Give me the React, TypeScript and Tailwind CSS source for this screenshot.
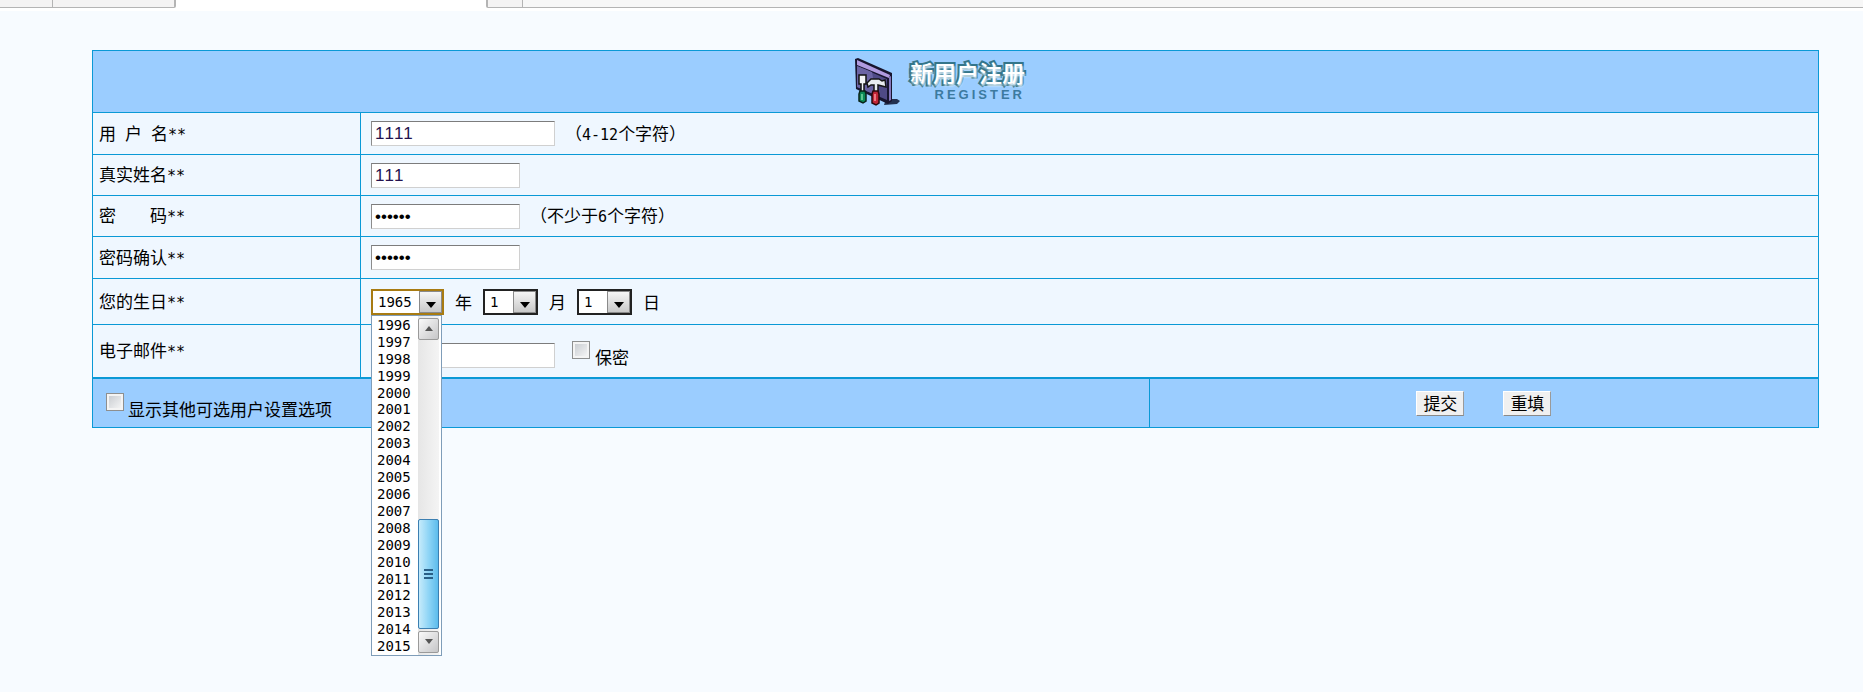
import type { ReactNode } from 'react';

const years = Array.from({ length: 20 }, (_, i) => 1996 + i);

const inputClass =
    'h-[25px] border border-t-[#7c7c7c] border-l-[#8c8c8c] border-r-[#d0d0d0] border-b-[#d0d0d0] bg-white pl-[3px] pt-px font-[Liberation_Sans,sans-serif] text-[17px] leading-[22px] [font-kerning:none] outline-none';

const cellBorder = 'border border-[#0a99d6]';

function Mono({ children }: { children: ReactNode }) {
    return <span className="font-[DejaVu_Sans_Mono,monospace] text-[15px]">{children}</span>;
}

function Row({ label, htmlFor, height, children }: { label: ReactNode; htmlFor: string; height: string; children: ReactNode }) {
    return (
        <tr className={height}>
            <th scope="row" className={`${cellBorder} pl-[6px] text-left align-middle font-normal`}>
                <label htmlFor={htmlFor} className="whitespace-pre">
                    {label}
                    <Mono>**</Mono>
                </label>
            </th>
            <td className={`${cellBorder} pl-[10px] align-middle`}>{children}</td>
        </tr>
    );
}

function ToolsLogo() {
    return (
        <svg width="48" height="48" viewBox="0 0 48 48" aria-hidden="true">
            <path d="M32 41 43 41 46 43 43 46 30 47Z" fill="#23304f" />
            <path d="M1 1 4 0 38 15 38 43 34 46 2 31Z" fill="#17152f" />
            <path d="M3 2 36 17 35 20 3 7Z" fill="#b09be0" />
            <path d="M3 8 33 21 33 42 3 29Z" fill="#4f4a86" />
            <path d="M3 8 18 14 22 37 3 29Z" fill="#6b64a4" />
            <path d="M35 19 37 18 37 42 35 43Z" fill="#8577bb" />
            <path d="M5 17h7v9h-2v8H7v-8H5Z" fill="#f2f4f6" stroke="#111" strokeWidth="1.5" />
            <path d="M6 33h5l1 3v7l-3 2-4-2v-7Z" fill="#0c8a56" stroke="#082318" strokeWidth="1.5" />
            <path d="M7 36h2v6H7Z" fill="#5cc78f" />
            <path d="M13 25 17 21h8l3 2 3-1 1 7-4-1-4-1v7h-4v-7h-3l-3 2Z" fill="#e9edf0" stroke="#151515" strokeWidth="1.5" />
            <path d="M19 33h5l1 3v9l-3 2-4-2v-9Z" fill="#c02536" stroke="#2b080c" strokeWidth="1.5" />
            <path d="M20 36h2v7h-2Z" fill="#ee7781" />
        </svg>
    );
}

function Dropdown({ id, label, value, className, children }: { id: string; label: string; value: string; className: string; children?: ReactNode }) {
    return (
        <div className={`relative h-[26px] border-2 bg-white ${className}`}>
            <select
                id={id}
                aria-label={label}
                defaultValue={value}
                className="block h-full w-full appearance-none pl-[5px] font-[DejaVu_Sans_Mono,monospace] text-[14px] leading-[22px] text-black outline-none"
            >
                <option value={value}>{value}</option>
            </select>
            <span className="pointer-events-none absolute top-0 right-0 flex h-full w-[23px] items-end justify-center border border-[#8a8a8a] bg-gradient-to-b from-[#f6f6f6] to-[#c9c9c9] pb-[4px]">
                <svg width="10" height="6" viewBox="0 0 10 6"><path d="M0 0h10L5 6Z" fill="#000" /></svg>
            </span>
            {children}
        </div>
    );
}

function ScrollArrow({ d }: { d: string }) {
    return (
        <span className="flex h-[22px] w-full items-center justify-center rounded-xs border border-[#9a9a9a] bg-gradient-to-br from-[#fafafa] to-[#c6c6c8]">
            <svg width="8" height="5" viewBox="0 0 8 5"><path d={d} fill="#555" /></svg>
        </span>
    );
}

function YearList() {
    return (
        <div className="absolute top-[24px] -left-[2px] z-10 flex h-[341px] w-[71px] border border-[#7f9db9] bg-white">
            <ul role="listbox" aria-label="年份" className="flex flex-1 flex-col pt-px pl-[5px] font-[DejaVu_Sans_Mono,monospace] text-[14px] leading-[16px] text-black">
                {years.map((year) => (
                    <li key={year} role="option" aria-selected={false} className="flex flex-1 items-center">{year}</li>
                ))}
            </ul>
            <div className="mr-[2px] flex w-[21px] flex-col bg-gradient-to-r from-[#e6e6e6] to-[#f4f4f4] py-[2px]">
                <ScrollArrow d="M0 5h8L4 0Z" />
                <span className="flex-1" />
                <span className="mb-[2px] flex h-[110px] flex-col items-center justify-center gap-[2px] rounded-xs border border-[#3c7fb1] bg-gradient-to-r from-[#c5ebfb] via-[#8fd5f6] to-[#5cbcec]">
                    <span className="h-[2px] w-[9px] bg-[#2a5f86]" />
                    <span className="h-[2px] w-[9px] bg-[#2a5f86]" />
                    <span className="h-[2px] w-[9px] bg-[#2a5f86]" />
                </span>
                <ScrollArrow d="M0 0h8L4 5Z" />
            </div>
        </div>
    );
}

function Checkbox({ id }: { id: string }) {
    return (
        <input
            id={id}
            type="checkbox"
            className="h-[18px] w-[18px] appearance-none border border-[#8e8f8f] bg-gradient-to-br from-[#c4c8cd] to-[#fafafa] shadow-[inset_0_0_0_2px_#f4f4f4]"
        />
    );
}

function FormButton({ type, children }: { type: 'submit' | 'reset'; children: ReactNode }) {
    return (
        <button type={type} className="h-[25px] w-[48px] border border-t-white border-l-white border-r-[#9a9a9a] border-b-[#8a8a8a] bg-[#f0f0f0] text-[17px] leading-[22px] text-black">
            {children}
        </button>
    );
}

export default function App() {
    return (
        <div className="min-h-screen bg-[#f7fbff] font-[Noto_Sans_CJK_SC,sans-serif] text-[17px] leading-[22px] text-black">
            {/* Browser tab strip */}
            <div className="flex h-[11px] bg-white">
                <div className="h-[8px] w-[53px] border-r border-b border-[#b4b4b4] bg-[#f4f3f3]" />
                <div className="h-[8px] w-[123px] rounded-br-xs border-r-2 border-b border-[#b4b4b4] bg-[#f4f3f3]" />
                <div className="w-[310px]" />
                <div className="h-[8px] w-[37px] rounded-bl-xs border-r border-b border-l-2 border-[#b4b4b4] bg-[#f4f3f3]" />
                <div className="h-[8px] flex-1 border-b border-[#b4b4b4] bg-[#f7f7f7]" />
            </div>

            <form className="pt-[39px] pr-[44px] pl-[92px]" onSubmit={(e) => e.preventDefault()}>
                <table className="w-full table-fixed border-collapse bg-[#eff7ff]">
                    <colgroup>
                        <col className="w-[268px]" />
                        <col />
                    </colgroup>
                    <tbody>
                        <tr className="h-[62px] bg-[#9bcdff]">
                            <td colSpan={2} className={cellBorder}>
                                <div className="flex items-center justify-center gap-[8px] pr-[32px]">
                                    <ToolsLogo />
                                    <h1 className="flex flex-col items-end">
                                        <span className="text-[23px] leading-[26px] font-medium text-white [-webkit-text-stroke:4px_#34758a] [paint-order:stroke_fill] [text-shadow:1px_2px_2px_#e8f5ff]">
                                            新用户注册
                                        </span>
                                        <span className="font-[Liberation_Sans,sans-serif] text-[13px] leading-[20px] font-bold tracking-[3px] text-[#3c7aa0]">REGISTER</span>
                                    </h1>
                                </div>
                            </td>
                        </tr>
                        <Row label={<>用<Mono> </Mono>户<Mono> </Mono>名</>} htmlFor="username" height="h-[42px]">
                            <div className="flex items-center gap-[10px]">
                                <input id="username" type="text" defaultValue="1111" className={`${inputClass} w-[184px] text-[#24124e]`} />
                                <span>（<Mono>4-12</Mono>个字符）</span>
                            </div>
                        </Row>
                        <Row label="真实姓名" htmlFor="realname" height="h-[41px]">
                            <input id="realname" type="text" defaultValue="111" className={`${inputClass} block w-[149px] text-[#24124e]`} />
                        </Row>
                        <Row label="密　　码" htmlFor="password" height="h-[41px]">
                            <div className="flex items-center gap-[10px]">
                                <input id="password" type="password" defaultValue="111111" className={`${inputClass} w-[149px] text-black`} />
                                <span>（不少于<Mono>6</Mono>个字符）</span>
                            </div>
                        </Row>
                        <Row label="密码确认" htmlFor="confirm" height="h-[42px]">
                            <input id="confirm" type="password" defaultValue="111111" className={`${inputClass} block w-[149px] text-black`} />
                        </Row>
                        <Row label="您的生日" htmlFor="year" height="h-[46px]">
                            <div className="flex items-center gap-[11px]">
                                <Dropdown id="year" label="年" value="1965" className="w-[73px] border-[#a87b12]">
                                    <YearList />
                                </Dropdown>
                                <span>年</span>
                                <Dropdown id="month" label="月" value="1" className="w-[55px] border-[#222]" />
                                <span>月</span>
                                <Dropdown id="day" label="日" value="1" className="w-[55px] border-[#222]" />
                                <span>日</span>
                            </div>
                        </Row>
                        <Row label="电子邮件" htmlFor="email" height="h-[53px]">
                            <div className="flex items-end pt-[7px]">
                                <input id="email" type="text" className={`${inputClass} w-[184px] text-[#24124e]`} />
                                <div className="ml-[17px] flex items-start gap-[5px]">
                                    <Checkbox id="secret" />
                                    <label htmlFor="secret" className="pt-[5px]">保密</label>
                                </div>
                            </div>
                        </Row>
                    </tbody>
                </table>

                {/* Footer actions */}
                <div className="grid grid-cols-[1058fr_669fr] border border-[#0a99d6] bg-[#9bcdff]">
                    <div className="flex h-[48px] items-start gap-[4px] border-r border-[#0a99d6] pt-[14px] pl-[13px]">
                        <Checkbox id="more" />
                        <label htmlFor="more" className="pt-[5px]">显示其他可选用户设置选项</label>
                    </div>
                    <div className="flex items-center justify-center gap-[39px]">
                        <FormButton type="submit">提交</FormButton>
                        <FormButton type="reset">重填</FormButton>
                    </div>
                </div>
            </form>
        </div>
    );
}
